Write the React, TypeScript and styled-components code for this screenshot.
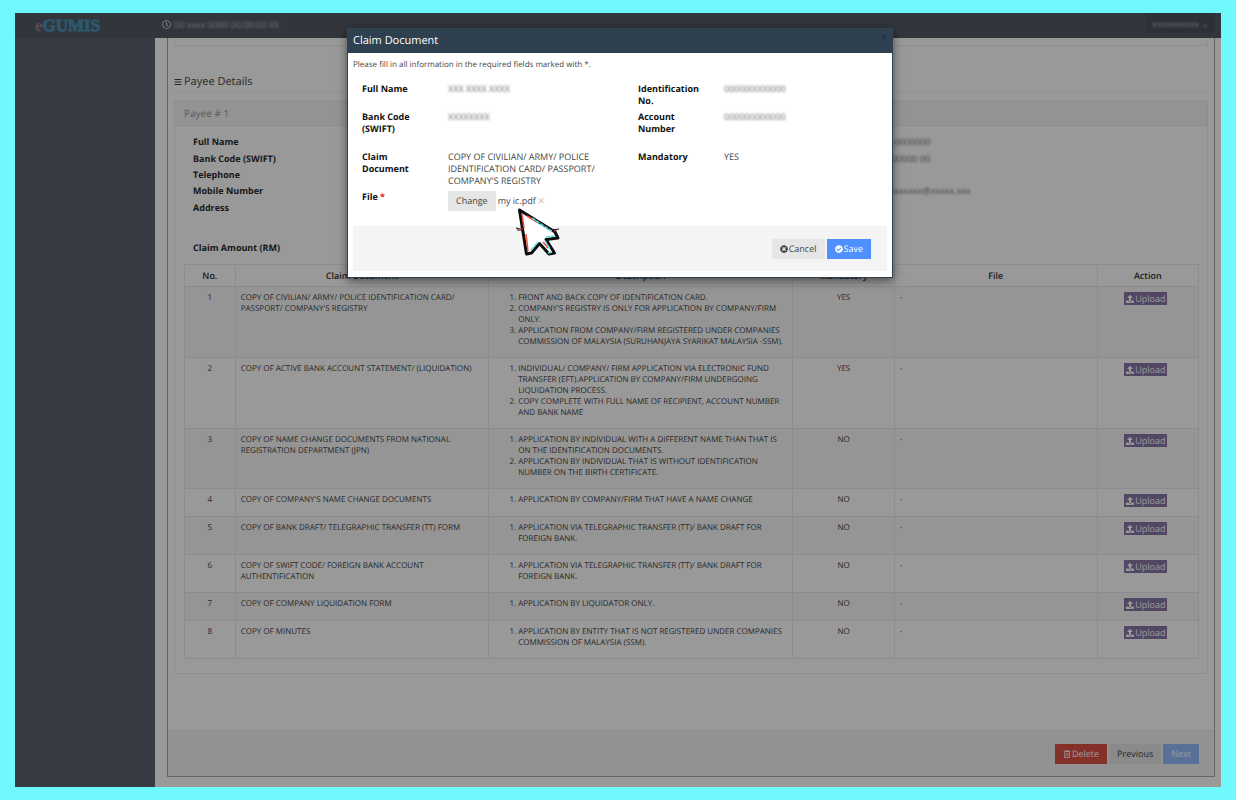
import React from 'react';
import styled, { createGlobalStyle } from 'styled-components';
import {
  FaBars,
  FaCheckCircle,
  FaRegClock,
  FaRegTrashAlt,
  FaTimesCircle,
  FaUpload,
} from 'react-icons/fa';

const GlobalStyle = createGlobalStyle`
  *, *::before, *::after { box-sizing: border-box; }
  body {
    margin: 0;
    background: #6ff9fc;
    font-family: "Open Sans", "Noto Sans", sans-serif;
    font-size: 8px;
    line-height: 11px;
    color: #444;
    text-rendering: geometricPrecision;
  }
  button { text-rendering: inherit; }
`;

const Frame = styled.div`
  min-height: 100vh;
  padding: 13px 15px;
  display: flex;
`;

const Screen = styled.div`
  position: relative;
  flex: 1;
  min-width: 0;
  display: flex;
  flex-direction: column;
  background: #fff;
`;

const TopBar = styled.header`
  height: 25px;
  display: flex;
  align-items: stretch;
  background: #545965;
  color: #d5d9e0;
`;

const Brand = styled.a`
  width: 140px;
  padding-left: 20px;
  display: flex;
  align-items: center;
  font-family: "Liberation Serif", serif;
  font-weight: 700;
  font-size: 17px;
  line-height: 24px;
  color: #4a93b5;
  -webkit-text-stroke: 1px #4a93b5;
  text-decoration: none;
`;

const BrandLead = styled.span`
  color: #8c7f80;
  -webkit-text-stroke: 0;
`;

const Clock = styled.div`
  flex: 1;
  padding: 0 7px 3px;
  display: flex;
  align-items: center;
  gap: 3px;
  font-size: 9px;
  svg { width: 9px; height: 9px; }
`;

const UserMenu = styled.div`
  width: 69px;
  height: 20px;
  margin-right: 6px;
  padding-right: 6px;
  display: flex;
  align-items: center;
  justify-content: flex-end;
  background: #4c505c;
  font-size: 9px;
`;

const Redacted = styled.span`
  filter: blur(1px);
  opacity: 0.8;
  white-space: nowrap;
`;

const Columns = styled.div`
  flex: 1;
  display: flex;
`;

const Sidebar = styled.aside`
  width: 140px;
  background: #5c626f;
`;

const Main = styled.main`
  flex: 1;
  min-width: 0;
  padding: 0 6px 10px 12px;
  display: flex;
`;

const Panel = styled.section`
  flex: 1;
  min-width: 0;
  display: flex;
  flex-direction: column;
  border: 1px solid #a4a8b2;
  border-top: 0;
`;

const PanelBody = styled.div`
  flex: 1;
  padding: 0 6px 56px;
`;

const PreviousCard = styled.div`
  height: 8px;
  border: 1px solid #eee;
  border-top: 0;
`;

const SectionTitle = styled.h2`
  margin: 27px 0 8px;
  height: 19px;
  padding-bottom: 1px;
  display: flex;
  align-items: center;
  gap: 2px;
  border-bottom: 1px solid #f3f3f3;
  font-size: 11px;
  line-height: 15px;
  font-weight: 400;
  color: #444;
  svg { width: 8px; height: 8px; }
`;

const Card = styled.div`
  border: 1px solid #eee;
`;

const CardHeader = styled.h3`
  margin: 0;
  padding: 0 9px;
  border-bottom: 1px solid #e6e6e6;
  background: #f5f5f5;
  font-size: 10px;
  line-height: 24px;
  font-weight: 400;
  color: #999;
`;

const CardBody = styled.div`
  padding: 8px 8px 14px 9px;
`;

const DetailList = styled.dl`
  margin: 0 0 26px;
  padding: 0 9px;
  height: 82px;
  display: grid;
  grid-template-columns: 673px 1fr;
  grid-template-rows: repeat(5, 1fr);
  align-items: center;
`;

const Term = styled.dt`
  font-size: 9px;
  line-height: 12px;
  font-weight: 700;
  color: #2b2b2b;
`;

const Detail = styled.dd`
  margin: 0;
  font-size: 9px;
  line-height: 12px;
`;

const AmountLabel = styled(Term).attrs({ as: 'div' })`
  padding: 0 9px;
  margin-bottom: 10px;
`;

const DocTable = styled.table`
  width: 100%;
  table-layout: fixed;
  border-collapse: collapse;
  th, td {
    border: 1px solid #eaeaea;
    padding: 5px;
  }
  th {
    font-size: 9px;
    font-weight: 600;
    color: #333;
  }
  td { vertical-align: top; }
  tbody tr { height: 28px; }
  tbody tr:nth-child(odd) { background: #f9f9f9; }
`;

const Col = styled.col<{ $share: number }>`
  width: ${(p) => p.$share}%;
`;

const Centered = styled.td`
  text-align: center;
`;

const Notes = styled.ol`
  margin: 0 0 5px;
  padding: 0 0 0 24px;
`;

const UploadButton = styled.button`
  height: 13px;
  margin: 0 4px 0 0;
  padding: 0 2px;
  display: inline-flex;
  align-items: center;
  gap: 1px;
  vertical-align: top;
  border: 0;
  background: #8775a7;
  color: #fff;
  font-family: inherit;
  font-size: 9px;
  line-height: 12px;
  svg { width: 8px; height: 8px; }
`;

const PanelFooter = styled.footer`
  height: 46px;
  padding: 0 15px;
  display: flex;
  align-items: center;
  justify-content: flex-end;
  gap: 2px;
  background: #f4f4f4;
  border-top: 1px solid #eee;
`;

const tones = {
  danger: { bg: '#dd5246', fg: '#fff' },
  plain: { bg: '#e6e6e6', fg: '#444' },
  primary: { bg: '#4d90fe', fg: '#fff' },
  muted: { bg: '#94bcfe', fg: '#fff' },
};

const Button = styled.button<{ $tone: keyof typeof tones }>`
  height: 20px;
  padding: 0 8px;
  display: inline-flex;
  align-items: center;
  gap: 1px;
  border: 0;
  background: ${(p) => tones[p.$tone].bg};
  color: ${(p) => tones[p.$tone].fg};
  font-family: inherit;
  font-size: 9px;
  line-height: 12px;
  white-space: nowrap;
  svg { width: 8px; height: 8px; }
`;

const Overlay = styled.div`
  position: absolute;
  inset: 0;
  padding: 15px 0 0 4px;
  display: flex;
  align-items: flex-start;
  justify-content: center;
  background: rgba(0, 0, 0, 0.4);
`;

const Dialog = styled.div`
  position: relative;
  width: 100%;
  max-width: 546px;
  background: #fff;
  border: 1px solid #2f4050;
  border-top: 0;
  box-shadow: 0 3px 9px rgba(0, 0, 0, 0.5);
`;

const DialogHeader = styled.div`
  height: 25px;
  padding: 0 5px;
  display: flex;
  justify-content: space-between;
  background: #2f4050;
  color: #fff;
`;

const DialogTitle = styled.h1`
  margin: 0;
  font-size: 11px;
  line-height: 26px;
  font-weight: 400;
`;

const IconButton = styled.button<{ $color: string }>`
  height: 18px;
  padding: 0;
  border: 0;
  background: none;
  color: ${(p) => p.$color};
  font-family: inherit;
  font-size: 12px;
  line-height: 18px;
`;

const DialogBody = styled.div`
  padding: 6px 5px;
  font-size: 9px;
  line-height: 12px;
`;

const Hint = styled.p`
  margin: 0 0 12px;
  font-size: 8px;
`;

const Fields = styled.div`
  padding: 0 9px;
  display: grid;
  grid-template-columns: 86px 190px 86px 1fr;
  row-gap: 4px;
`;

const FieldLabel = styled.label`
  padding-right: 20px;
  font-weight: 700;
  color: #111;
`;

const FieldValue = styled.div`
  padding-right: 40px;
`;

const Spacer = styled.div`
  grid-column: 1 / -1;
  height: 8px;
`;

const Required = styled.span`
  color: #e02222;
`;

const FileRow = styled.div`
  display: flex;
  align-items: center;
  gap: 2px;
  white-space: nowrap;
`;

const DialogFooter = styled.div`
  height: 45px;
  margin-top: 15px;
  padding: 0 16px;
  display: flex;
  align-items: center;
  justify-content: flex-end;
  gap: 2px;
  background: #f4f4f4;
`;

const Pointer = styled.svg`
  position: absolute;
  left: 156px;
  top: 168px;
  width: 70px;
  height: 70px;
  pointer-events: none;
`;

const documents = [
  {
    name: "COPY OF CIVILIAN/ ARMY/ POLICE IDENTIFICATION CARD/ PASSPORT/ COMPANY'S REGISTRY",
    mandatory: 'YES',
    notes: [
      'FRONT AND BACK COPY OF IDENTIFICATION CARD.',
      "COMPANY'S REGISTRY IS ONLY FOR APPLICATION BY COMPANY/FIRM ONLY.",
      'APPLICATION FROM COMPANY/FIRM REGISTERED UNDER COMPANIES COMMISSION OF MALAYSIA (SURUHANJAYA SYARIKAT MALAYSIA -SSM).',
    ],
  },
  {
    name: 'COPY OF ACTIVE BANK ACCOUNT STATEMENT/ (LIQUIDATION)',
    mandatory: 'YES',
    notes: [
      'INDIVIDUAL/ COMPANY/ FIRM APPLICATION VIA ELECTRONIC FUND TRANSFER (EFT).APPLICATION BY COMPANY/FIRM UNDERGOING LIQUIDATION PROCESS.',
      'COPY COMPLETE WITH FULL NAME OF RECIPIENT, ACCOUNT NUMBER AND BANK NAME',
    ],
  },
  {
    name: 'COPY OF NAME CHANGE DOCUMENTS FROM NATIONAL REGISTRATION DEPARTMENT (JPN)',
    mandatory: 'NO',
    notes: [
      'APPLICATION BY INDIVIDUAL WITH A DIFFERENT NAME THAN THAT IS ON THE IDENTIFICATION DOCUMENTS.',
      'APPLICATION BY INDIVIDUAL THAT IS WITHOUT IDENTIFICATION NUMBER ON THE BIRTH CERTIFICATE.',
    ],
  },
  {
    name: "COPY OF COMPANY'S NAME CHANGE DOCUMENTS",
    mandatory: 'NO',
    notes: ['APPLICATION BY COMPANY/FIRM THAT HAVE A NAME CHANGE'],
  },
  {
    name: 'COPY OF BANK DRAFT/ TELEGRAPHIC TRANSFER (TT) FORM',
    mandatory: 'NO',
    notes: ['APPLICATION VIA TELEGRAPHIC TRANSFER (TT)/ BANK DRAFT FOR FOREIGN BANK.'],
  },
  {
    name: 'COPY OF SWIFT CODE/ FOREIGN BANK ACCOUNT AUTHENTIFICATION',
    mandatory: 'NO',
    notes: ['APPLICATION VIA TELEGRAPHIC TRANSFER (TT)/ BANK DRAFT FOR FOREIGN BANK.'],
  },
  {
    name: 'COPY OF COMPANY LIQUIDATION FORM',
    mandatory: 'NO',
    notes: ['APPLICATION BY LIQUIDATOR ONLY.'],
  },
  {
    name: 'COPY OF MINUTES',
    mandatory: 'NO',
    notes: [
      'APPLICATION BY ENTITY THAT IS NOT REGISTERED UNDER COMPANIES COMMISSION OF MALAYSIA (SSM).',
    ],
  },
];

const payee: [string, string][] = [
  ['Full Name', '00000-0000000'],
  ['Bank Code (SWIFT)', '0000000000 00'],
  ['Telephone', ''],
  ['Mobile Number', 'xxxxxxxxxxxx@xxxxx.xxx'],
  ['Address', ''],
];

function DocumentTable() {
  return (
    <DocTable>
      <colgroup>
        {[5, 25, 30, 10, 20, 10].map((share, i) => (
          <Col key={i} $share={share} />
        ))}
      </colgroup>
      <thead>
        <tr>
          {['No.', 'Claim Document', 'Description', 'Mandatory', 'File', 'Action'].map((h) => (
            <th key={h} scope="col">{h}</th>
          ))}
        </tr>
      </thead>
      <tbody>
        {documents.map((doc, i) => (
          <tr key={doc.name}>
            <Centered>{i + 1}</Centered>
            <td>{doc.name}</td>
            <td>
              <Notes>
                {doc.notes.map((note) => (
                  <li key={note}>{note}</li>
                ))}
              </Notes>
            </td>
            <Centered>{doc.mandatory}</Centered>
            <td>-</td>
            <Centered>
              <UploadButton type="button"><FaUpload />Upload</UploadButton>
            </Centered>
          </tr>
        ))}
      </tbody>
    </DocTable>
  );
}

function MousePointer() {
  const outline = 'M15.5 14 L51 36 L54 42 L42 43.500 L50.500 57 L45 58 L35.500 47.500 L27.500 57 L22.500 58 Z';
  return (
    <Pointer viewBox="0 0 70 70" aria-hidden="true">
      <path d={outline} fill="#fff" stroke="#0c0c0c" strokeWidth="3" strokeLinejoin="round" />
      <path d="M18 18 L20 32 M22 38 L24 55 M23 20 L33 26 M39 46 L44 52" stroke="#f0503c" strokeWidth="1.500" fill="none" />
      <path d="M28 22 L49 36 M42 41 L52 40 M27 54 L34 46 M41 45 L46 53 M44 57 L49 56" stroke="#4fe6ee" strokeWidth="1.500" fill="none" strokeDasharray="4 1" />
      <path d="M12 32 L17 33 L20 32 M13 34 L20 34 M48 34 L55 33" stroke="#0c0c0c" strokeWidth="1" fill="none" />
      <path d="M14 33 L19 33 M50 35 L53 34" stroke="#f0503c" strokeWidth="1" fill="none" />
    </Pointer>
  );
}

function ClaimDialog() {
  return (
    <Dialog role="dialog" aria-labelledby="dialog-title">
      <DialogHeader>
        <DialogTitle id="dialog-title">Claim Document</DialogTitle>
        <IconButton type="button" aria-label="Close" $color="#1d2b38">×</IconButton>
      </DialogHeader>
      <DialogBody>
        <Hint>Please fill in all information in the required fields marked with *.</Hint>
        <Fields>
          <FieldLabel as="div">Full Name</FieldLabel>
          <FieldValue><Redacted>XXX XXXX XXXX</Redacted></FieldValue>
          <FieldLabel as="div">Identification No.</FieldLabel>
          <FieldValue><Redacted>000000000000</Redacted></FieldValue>
          <FieldLabel as="div">Bank Code (SWIFT)</FieldLabel>
          <FieldValue><Redacted>XXXXXXXX</Redacted></FieldValue>
          <FieldLabel as="div">Account Number</FieldLabel>
          <FieldValue><Redacted>000000000000</Redacted></FieldValue>
          <Spacer />
          <FieldLabel as="div">Claim Document</FieldLabel>
          <FieldValue>
            COPY OF CIVILIAN/ ARMY/ POLICE IDENTIFICATION CARD/ PASSPORT/ COMPANY'S REGISTRY
          </FieldValue>
          <FieldLabel as="div">Mandatory</FieldLabel>
          <FieldValue>YES</FieldValue>
          <FieldLabel htmlFor="change-file">File <Required>*</Required></FieldLabel>
          <FileRow>
            <Button id="change-file" type="button" $tone="plain">Change</Button>
            <span>my ic.pdf</span>
            <IconButton type="button" aria-label="Remove file" $color="#bbb">×</IconButton>
          </FileRow>
        </Fields>
        <DialogFooter>
          <Button type="button" $tone="plain"><FaTimesCircle />Cancel</Button>
          <Button type="button" $tone="primary"><FaCheckCircle />Save</Button>
        </DialogFooter>
      </DialogBody>
      <MousePointer />
    </Dialog>
  );
}

export default function App() {
  return (
    <>
      <GlobalStyle />
      <Frame>
        <Screen>
          <TopBar>
            <Brand href="#"><BrandLead>e</BrandLead>GUMIS</Brand>
            <Clock>
              <FaRegClock />
              <Redacted>00 xxxx 0000 00:00:00 XX</Redacted>
            </Clock>
            <UserMenu><Redacted>xxxxxxxxxx ⌄</Redacted></UserMenu>
          </TopBar>
          <Columns>
            <Sidebar />
            <Main>
              <Panel>
                <PanelBody>
                  <PreviousCard />
                  <SectionTitle><FaBars />Payee Details</SectionTitle>
                  <Card>
                    <CardHeader>Payee # 1</CardHeader>
                    <CardBody>
                      <DetailList>
                        {payee.map(([label, value]) => (
                          <React.Fragment key={label}>
                            <Term>{label}</Term>
                            <Detail>{value && <Redacted>{value}</Redacted>}</Detail>
                          </React.Fragment>
                        ))}
                      </DetailList>
                      <AmountLabel>Claim Amount (RM)</AmountLabel>
                      <DocumentTable />
                    </CardBody>
                  </Card>
                </PanelBody>
                <PanelFooter>
                  <Button type="button" $tone="danger"><FaRegTrashAlt />Delete</Button>
                  <Button type="button" $tone="plain">Previous</Button>
                  <Button type="button" $tone="muted">Next</Button>
                </PanelFooter>
              </Panel>
            </Main>
          </Columns>
          <Overlay>
            <ClaimDialog />
          </Overlay>
        </Screen>
      </Frame>
    </>
  );
}
